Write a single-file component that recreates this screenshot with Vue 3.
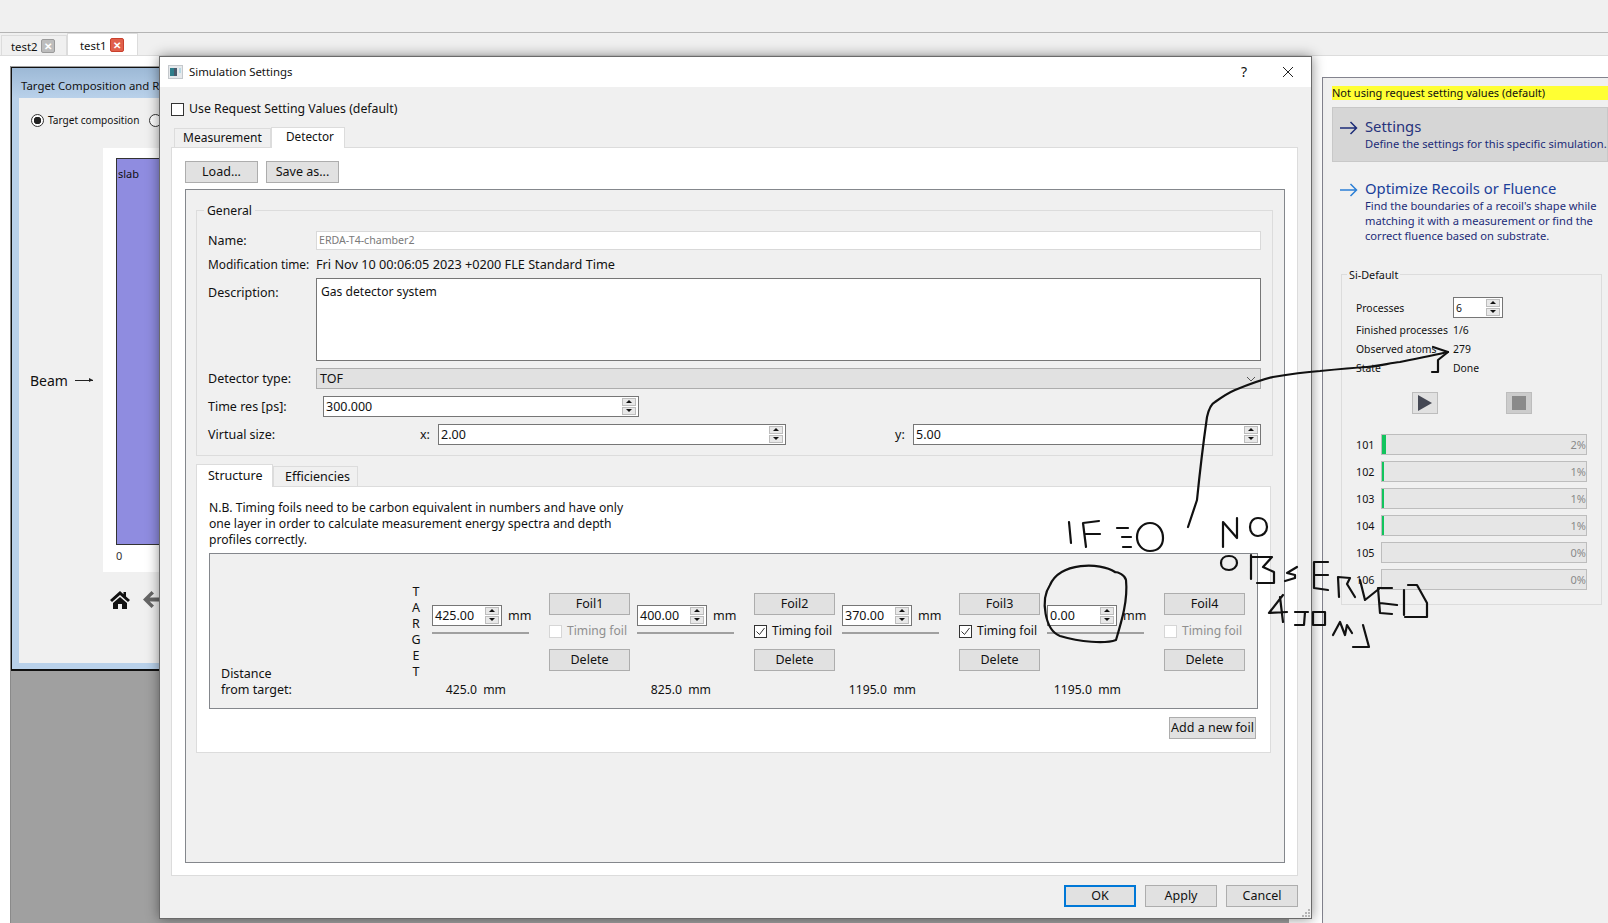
<script setup>
const segments = [
  { value: '425.00', foil: 'Foil1', total: '425.0', checked: false, disabled: true },
  { value: '400.00', foil: 'Foil2', total: '825.0', checked: true, disabled: false },
  { value: '370.00', foil: 'Foil3', total: '1195.0', checked: true, disabled: false },
  { value: '0.00', foil: 'Foil4', total: '1195.0', checked: false, disabled: true }
]

const bars = [
  { id: 101, pct: 2, fill: 4 },
  { id: 102, pct: 1, fill: 2 },
  { id: 103, pct: 1, fill: 2 },
  { id: 104, pct: 1, fill: 2 },
  { id: 105, pct: 0, fill: 0 },
  { id: 106, pct: 0, fill: 0 }
]

const ink = [
  'M1188 527 L1197 500 C1199 480 1203 445 1207 417 C1209 408 1211 404 1215 402 C1222 397 1228 393 1235 390 C1250 384 1260 380 1273 377 C1290 374 1305 372 1320 371 C1340 369 1350 368 1367 367 C1380 366 1390 363 1400 362 C1420 358 1435 355 1448 352',
  'M1433 347 L1448 352 L1438 360 L1438 372 L1432 372',
  'M1069 522 L1071 543',
  'M1086 547 L1083 523 L1099 521 M1086 534 L1100 534',
  'M1117 528 L1128 528 M1122 537 L1131 537 M1123 547 L1131 547',
  'M1150 523 C1158 523 1163 530 1163 538 C1163 546 1158 551 1150 551 C1142 551 1137 544 1137 537 C1137 529 1143 523 1150 523 Z',
  'M1223 547 L1223 522 L1237 538 L1237 518',
  'M1258 518 C1264 518 1267 522 1267 527 C1267 532 1263 536 1258 536 C1253 536 1250 532 1250 527 C1250 522 1253 518 1258 518 Z',
  'M1229 556 C1234 556 1237 559 1237 563 C1237 567 1233 570 1229 570 C1224 570 1221 567 1221 563 C1221 559 1224 556 1229 556 Z',
  'M1251 555 L1251 579 M1251 557 L1272 557 L1263 567 L1274 572 L1274 583 L1257 583',
  'M1297 567 L1287 573 L1295 575 L1295 578 L1285 581',
  'M1328 562 L1314 562 L1314 588 L1328 590 M1314 575 L1328 575',
  'M1339 597 L1338 577 L1350 578 L1347 584 L1355 597',
  'M1360 580 L1365 600 L1380 588',
  'M1392 588 L1378 588 L1380 613 L1392 614 M1380 603 L1397 605',
  'M1404 615 L1404 590 M1408 585 L1417 585 L1427 603 L1427 617 L1405 617',
  'M1283 595 L1269 613 L1287 612 M1280 597 L1283 622',
  'M1295 612 L1308 612 M1305 612 L1304 625 L1295 625',
  'M1313 612 L1325 612 L1325 625 L1313 625 Z',
  'M1333 635 L1340 622 L1345 635 L1347 625 L1352 633',
  'M1363 625 L1369 647 L1353 647',
  'M1115 572 C1100 562 1060 562 1050 585 C1040 600 1045 630 1060 636 C1080 642 1105 644 1116 640 C1122 620 1128 600 1126 580 C1125 575 1118 572 1115 572'
]
</script>

<template>
  <div class="screen">
    <div class="menu-band"></div>
    <div class="doc-tabs">
      <div class="doc-tab">
        test2
        <span class="tab-close">✕</span>
      </div>
      <div class="doc-tab active">
        test1
        <span class="tab-close red">✕</span>
      </div>
    </div>

    <div class="mdi-grey"></div>

    <!-- window behind the dialog -->
    <div class="target-window">
      <div class="target-title">Target Composition and Recoils</div>
      <div class="target-body">
        <div class="radio-row">
          <span class="radio on"></span>
          <span>Target composition</span>
          <span class="radio second"></span>
        </div>
        <div class="plot-row">
          <div class="beam">Beam <span class="beam-arrow"></span></div>
          <div class="plot-col">
            <div class="plot">
              <div class="slab"><span>slab</span></div>
              <div class="tick">0</div>
            </div>
            <div class="plot-tools">
              <svg width="22" height="19" viewBox="0 0 22 19">
                <path d="M11 1 L1 10 L3 12 L11 5 L19 12 L21 10 L17 6.5 L17 2 L14.5 2 L14.5 4.3 Z M4 13 L11 7 L18 13 L18 19 L13 19 L13 14 L9 14 L9 19 L4 19 Z" fill="#111" />
              </svg>
              <svg width="20" height="19" viewBox="0 0 20 19">
                <path d="M9.5 1 L1 9.5 L9.5 18 L12 15.5 L7.7 11.5 L20 11.5 L20 7.5 L7.7 7.5 L12 3.5 Z" fill="#666" />
              </svg>
            </div>
          </div>
        </div>
      </div>
    </div>

    <!-- run panel on the right -->
    <div class="run-window">
      <div class="notice">Not using request setting values (default)</div>
      <div class="link-box current">
        <svg class="link-arrow" width="18" height="14" viewBox="0 0 18 14">
          <path d="M0 7 H16.5 M10.5 1 L16.5 7 L10.5 13" fill="none" stroke="#1c2c78" stroke-width="1.5" />
        </svg>
        <div>
          <div class="link-head">Settings</div>
          <div class="link-sub">Define the settings for this specific simulation.</div>
        </div>
      </div>
      <div class="link-box">
        <svg class="link-arrow" width="18" height="14" viewBox="0 0 18 14">
          <path d="M0 7 H16.5 M10.5 1 L16.5 7 L10.5 13" fill="none" stroke="#2b7fd6" stroke-width="1.5" />
        </svg>
        <div>
          <div class="link-head optimize">Optimize Recoils or Fluence</div>
          <div class="link-sub">
            Find the boundaries of a recoil's shape while<br />
            matching it with a measurement or find the<br />
            correct fluence based on substrate.
          </div>
        </div>
      </div>

      <div class="si-group">
        <div class="si-title">Si-Default</div>
        <div class="si-grid">
          <span class="si-first">Processes</span>
          <div class="spin si-spin">
            <span class="spin-val">6</span>
            <span class="spin-btns"><i class="up"></i><i class="down"></i></span>
          </div>
          <span>Finished processes</span><span>1/6</span>
          <span>Observed atoms</span><span>279</span>
          <span>State</span><span>Done</span>
        </div>
        <div class="run-btns">
          <div class="run-btn">
            <svg width="14" height="16" viewBox="0 0 14 16"><path d="M0 0 L14 8 L0 16 Z" fill="#454854" /></svg>
          </div>
          <div class="run-btn off">
            <span class="stop-mark"></span>
          </div>
        </div>
        <div class="bars">
          <div v-for="bar in bars" :key="bar.id" class="bar-row">
            <span class="bar-id">{{ bar.id }}</span>
            <div class="bar">
              <span class="bar-fill" :style="{ width: bar.fill + 'px' }"></span>
              <span class="bar-pct">{{ bar.pct }}%</span>
            </div>
          </div>
        </div>
      </div>
    </div>

    <!-- settings dialog -->
    <div class="dialog">
      <div class="dialog-title">
        <svg class="dialog-icon" width="15" height="14" viewBox="0 0 15 14">
          <rect x="0.5" y="0.5" width="14" height="13" fill="#e6e9ec" stroke="#c4c8cc" />
          <rect x="2" y="3" width="4" height="8" fill="#2f7f8c" />
          <rect x="6" y="3" width="3" height="8" fill="#4a5a6c" />
          <rect x="11" y="3" width="2" height="5" fill="#b6d8e4" />
        </svg>
        <span class="dialog-name">Simulation Settings</span>
        <span class="help">?</span>
        <svg class="close-x" width="12" height="12" viewBox="0 0 12 12">
          <path d="M1 1 L11 11 M11 1 L1 11" stroke="#222" stroke-width="1" fill="none" />
        </svg>
      </div>

      <div class="dialog-body">
        <label class="use-default">
          <span class="check"></span>
          Use Request Setting Values (default)
        </label>

        <div class="tabs top-tabs">
          <div class="tab">Measurement</div>
          <div class="tab active">Detector</div>
        </div>

        <div class="pane">
          <div class="file-btns">
            <div class="btn">Load...</div>
            <div class="btn">Save as...</div>
          </div>

          <div class="frame">
            <div class="group">
              <div class="group-title">General</div>

              <div class="row name-row">
                <span class="lbl">Name:</span>
                <div class="name-input">ERDA-T4-chamber2</div>
              </div>
              <div class="row mod-row">
                <span class="lbl mod-lbl">Modification time:</span>
                <span class="mod-val">Fri Nov 10 00:06:05 2023 +0200 FLE Standard Time</span>
              </div>
              <div class="row desc-row">
                <span class="lbl desc-lbl">Description:</span>
                <div class="desc">Gas detector system</div>
              </div>
              <div class="row combo-row">
                <span class="lbl">Detector type:</span>
                <div class="combo">
                  TOF
                  <svg width="10" height="6" viewBox="0 0 10 6"><path d="M1 1 L5 5 L9 1" fill="none" stroke="#555" /></svg>
                </div>
              </div>
              <div class="row time-row">
                <span class="lbl time-lbl">Time res [ps]:</span>
                <div class="spin time-spin">
                  <span class="spin-val">300.000</span>
                  <span class="spin-btns"><i class="up"></i><i class="down"></i></span>
                </div>
              </div>
              <div class="row size-row">
                <span class="size-lbl">Virtual size:</span>
                <span class="axis">x:</span>
                <div class="spin size-spin">
                  <span class="spin-val">2.00</span>
                  <span class="spin-btns"><i class="up"></i><i class="down"></i></span>
                </div>
                <span class="axis axis-y">y:</span>
                <div class="spin size-spin">
                  <span class="spin-val">5.00</span>
                  <span class="spin-btns"><i class="up"></i><i class="down"></i></span>
                </div>
              </div>
            </div>

            <div class="tabs sub-tabs">
              <div class="tab active">Structure</div>
              <div class="tab">Efficiencies</div>
            </div>
            <div class="sub-pane">
              <p class="note">
                N.B. Timing foils need to be carbon equivalent in numbers and have only<br />
                one layer in order to calculate measurement energy spectra and depth<br />
                profiles correctly.
              </p>

              <div class="foils">
                <div class="dist-label">Distance<br />from target:</div>
                <div class="target-word">
                  <span v-for="(c, i) in 'TARGET'.split('')" :key="i">{{ c }}</span>
                </div>
                <div v-for="seg in segments" :key="seg.foil" class="segment">
                  <div class="seg-dist">
                    <div class="seg-top">
                      <div class="spin foil-spin">
                        <span class="spin-val">{{ seg.value }}</span>
                        <span class="spin-btns"><i class="up"></i><i class="down"></i></span>
                      </div>
                      <span class="mm">mm</span>
                    </div>
                    <div class="seg-line"></div>
                  </div>
                  <div class="foil">
                    <div class="btn foil-btn">{{ seg.foil }}</div>
                    <div class="timing" :class="{ disabled: seg.disabled }">
                      <span class="check" :class="{ checked: seg.checked }">
                        <svg v-if="seg.checked" width="11" height="11" viewBox="0 0 11 11">
                          <path d="M1.5 5.5 L4.5 8.5 L9.5 2" fill="none" stroke="#333" stroke-width="1" />
                        </svg>
                      </span>
                      Timing foil
                    </div>
                    <div class="btn foil-btn">Delete</div>
                  </div>
                </div>
                <div v-for="(seg, i) in segments" :key="i" class="total" :style="{ gridColumn: i + 3 }">
                  {{ seg.total }}&nbsp; mm
                </div>
              </div>

              <div class="add-row">
                <div class="btn add-btn">Add a new foil</div>
              </div>
            </div>
          </div>
        </div>

        <div class="dialog-actions">
          <div class="btn action default">OK</div>
          <div class="btn action">Apply</div>
          <div class="btn action">Cancel</div>
        </div>
      </div>
      <svg class="grip" width="10" height="10" viewBox="0 0 10 10">
        <g fill="#b5b5b5">
          <rect x="7" y="1" width="2" height="2" />
          <rect x="4" y="4" width="2" height="2" />
          <rect x="7" y="4" width="2" height="2" />
          <rect x="1" y="7" width="2" height="2" />
          <rect x="4" y="7" width="2" height="2" />
          <rect x="7" y="7" width="2" height="2" />
        </g>
      </svg>
    </div>

    <!-- pen annotations drawn over the screenshot -->
    <svg class="ink" width="1608" height="923" viewBox="0 0 1608 923">
      <path v-for="(d, i) in ink" :key="i" :d="d" />
    </svg>
  </div>
</template>

<style>
html,
body {
  margin: 0;
  background: #fff;
}
</style>

<style scoped>
.screen {
  position: relative;
  width: 1608px;
  height: 923px;
  overflow: hidden;
  background: #fff;
  font-family: "Noto Sans", "Liberation Sans", sans-serif;
  font-size: 12.5px;
  line-height: 16px;
  color: #111;
}

.menu-band {
  height: 32px;
  background: #f0f0f0;
  border-bottom: 1px solid #b4b4b4;
}

.doc-tabs {
  display: flex;
  align-items: flex-end;
  height: 22px;
  padding-left: 1px;
  background: #f0f0f0;
  border-bottom: 1px solid #dcdcdc;
}

.doc-tab {
  display: flex;
  align-items: center;
  gap: 3px;
  width: 66px;
  height: 20px;
  box-sizing: border-box;
  padding: 2px 0 0 9px;
  border: 1px solid #dcdcdc;
  border-bottom: 0;
  font-size: 11.4px;
}

.doc-tab.active {
  width: 71px;
  height: 22px;
  padding: 2px 0 0 12px;
  background: #fff;
}

.tab-close {
  display: block;
  width: 12px;
  height: 12px;
  margin-top: -2px;
  border: 1px solid #9a9a9a;
  border-radius: 2px;
  background: #bdbdbd;
  color: #fff;
  font-size: 10px;
  font-weight: 700;
  line-height: 12px;
  text-align: center;
}

.tab-close.red {
  border-color: #c9402c;
  background: #e0604c;
}

.mdi-grey {
  position: absolute;
  left: 10px;
  top: 66px;
  width: 1279px;
  height: 857px;
  background: #a0a0a0;
  border-left: 1px solid #8a8a8a;
  box-sizing: border-box;
}

.target-window {
  position: absolute;
  left: 11px;
  top: 67px;
  width: 400px;
  height: 604px;
  box-sizing: border-box;
  display: flex;
  flex-direction: column;
  border: 1px solid #111;
  border-bottom: 2px solid #111;
  background: #b9d1ea;
}

.target-title {
  height: 30px;
  padding-left: 9px;
  line-height: 35px;
  font-size: 11.4px;
  background: linear-gradient(#9db9d6, #b9d1ea);
  white-space: nowrap;
}

.target-body {
  flex: 1;
  margin: 0 0 6px 7px;
  background: #f0f0f0;
}

.radio-row {
  display: flex;
  align-items: center;
  height: 44px;
  padding-left: 12px;
  font-size: 10.1px;
}

.radio {
  width: 11px;
  height: 11px;
  margin-right: 4px;
  border: 1px solid #333;
  border-radius: 50%;
  background: #fff;
  box-sizing: content-box;
}

.radio.on {
  background: radial-gradient(circle, #222 0 3.5px, #fff 4px);
}

.radio.second {
  margin-left: 10px;
}

.plot-row {
  display: flex;
  height: 420px;
  margin-top: 6px;
}

.beam {
  display: flex;
  align-items: center;
  gap: 7px;
  width: 84px;
  height: 443px;
  margin-top: 11px;
  padding-left: 11px;
  box-sizing: border-box;
  font-size: 14px;
  white-space: nowrap;
}

.beam-arrow {
  position: relative;
  width: 18px;
  height: 1px;
  background: #222;
}

.beam-arrow::after {
  content: "";
  position: absolute;
  right: 0;
  top: -2px;
  border-left: 4px solid #222;
  border-top: 2.5px solid transparent;
  border-bottom: 2.5px solid transparent;
}

.plot-col {
  display: flex;
  flex-direction: column;
}

.plot {
  flex: none;
  width: 280px;
  height: 424px;
  box-sizing: border-box;
  padding: 10px 0 0 13px;
  background: #fff;
}

.slab {
  width: 240px;
  height: 387px;
  box-sizing: border-box;
  padding: 7px 0 0 1px;
  border: 1px solid #333;
  background: #8f8ce0;
  font-size: 11px;
}

.tick {
  margin-top: 3px;
  font-size: 11px;
  color: #333;
}

.plot-tools {
  display: flex;
  gap: 11px;
  margin: 18px 0 0 6px;
}

.run-window {
  position: absolute;
  left: 1322px;
  top: 77px;
  width: 286px;
  height: 846px;
  box-sizing: border-box;
  padding: 8px 0 0 9px;
  border-left: 1px solid #83838e;
  border-top: 1px solid #83838e;
  background: #f0f0f0;
}

.notice {
  height: 14px;
  background: #ffff33;
  font-size: 11px;
  line-height: 14px;
  white-space: nowrap;
}

.link-box {
  display: flex;
  gap: 7px;
  padding: 8px 0 0 7px;
  height: 55px;
  box-sizing: border-box;
  color: #1c2c78;
  white-space: nowrap;
}

.link-box.current {
  margin-top: 7px;
  border: 1px solid #c8c8c8;
  background: #d6d6d6;
}

.link-box + .link-box {
  height: 110px;
  padding: 16px 0 0 8px;
}

.link-arrow {
  margin-top: 5px;
  flex: none;
}

.link-head {
  font-size: 14.8px;
  line-height: 20px;
  color: #26337c;
}

.link-head.optimize {
  color: #1b3f9a;
}

.link-sub {
  font-size: 11.15px;
  line-height: 15px;
}

.si-group {
  width: 261px;
  height: 331px;
  margin: 2px 0 0 9px;
  box-sizing: border-box;
  padding: 0 14px;
  border: 1px solid #dcdcdc;
}

.si-title {
  width: fit-content;
  margin: -8px 0 14px -9px;
  padding: 0 2px;
  background: #f0f0f0;
  font-size: 10.8px;
}

.si-grid {
  display: grid;
  grid-template-columns: 97px 1fr;
  grid-template-rows: 23px;
  grid-auto-rows: 19px;
  align-items: center;
  font-size: 10.4px;
  white-space: nowrap;
}

.si-first {
  align-self: start;
  line-height: 22px;
}

.si-spin {
  align-self: start;
  width: 50px;
  height: 20px;
}

.run-btns {
  display: flex;
  gap: 68px;
  margin: 15px 0 0 56px;
}

.run-btn {
  display: flex;
  align-items: center;
  justify-content: center;
  width: 26px;
  height: 22px;
  box-sizing: border-box;
  border: 1px solid #bdbdbd;
  background: #e1e1e1;
}

.run-btn.off {
  background: #cccccc;
}

.stop-mark {
  width: 14px;
  height: 14px;
  background: #8a8a8a;
}

.bars {
  display: flex;
  flex-direction: column;
  gap: 6px;
  margin-top: 20px;
}

.bar-row {
  display: flex;
  align-items: center;
}

.bar-id {
  width: 25px;
  font-size: 10.8px;
}

.bar {
  display: flex;
  justify-content: space-between;
  width: 206px;
  height: 21px;
  box-sizing: border-box;
  border: 1px solid #bdbdbd;
  background: #e6e6e6;
}

.bar-fill {
  background: #12c45d;
}

.bar-pct {
  align-self: center;
  color: #8a8a8a;
  font-size: 11px;
}

.dialog {
  position: absolute;
  left: 159px;
  top: 56px;
  width: 1153px;
  height: 863px;
  box-sizing: border-box;
  display: flex;
  flex-direction: column;
  border: 1px solid #6a6a6a;
  background: #f0f0f0;
  box-shadow: 0 0 12px rgba(0, 0, 0, 0.45);
}

.dialog-title {
  display: flex;
  align-items: center;
  height: 30px;
  padding: 0 17px 0 8px;
  background: #fff;
}

.dialog-icon {
  margin-right: 6px;
}

.dialog-name {
  flex: 1;
  font-size: 11.4px;
}

.help {
  margin-right: 35px;
  font-size: 14px;
}

.dialog-body {
  flex: 1;
  padding: 14px 13px 0 11px;
  display: flex;
  flex-direction: column;
}

.use-default {
  display: flex;
  align-items: center;
  gap: 5px;
  height: 16px;
  margin-bottom: 9px;
  font-size: 12.3px;
}

.check {
  display: inline-flex;
  align-items: center;
  justify-content: center;
  width: 11px;
  height: 11px;
  flex: none;
  border: 1px solid #333;
  background: #fff;
}

.tabs {
  display: flex;
  align-items: flex-end;
  height: 21px;
  padding-left: 3px;
}

.tab {
  height: 19px;
  padding: 0 7px 0 11px;
  border: 1px solid #dcdcdc;
  border-bottom: 0;
  line-height: 20px;
}

.tab.active {
  height: 21px;
  margin-bottom: -1px;
  background: #fff;
  position: relative;
  z-index: 1;
  padding: 0 13px;
}

.top-tabs .tab {
  box-sizing: border-box;
  width: 97px;
  padding: 0 0 0 8px;
  font-size: 12px;
  line-height: 18px;
}

.top-tabs .tab.active {
  width: 74px;
  padding: 0 0 0 14px;
  font-size: 11.75px;
  line-height: 17px;
}

.pane {
  height: 729px;
  box-sizing: border-box;
  padding: 13px 12px 13px 13px;
  border: 1px solid #dcdcdc;
  background: #fff;
}

.file-btns {
  display: flex;
  gap: 8px;
  margin-bottom: 6px;
}

.btn {
  width: 73px;
  height: 22px;
  box-sizing: border-box;
  border: 1px solid #adadad;
  background: #e1e1e1;
  line-height: 20px;
  text-align: center;
}

.frame {
  height: 674px;
  box-sizing: border-box;
  padding: 20px 9px 0 10px;
  border: 1px solid #84878c;
  background: #f0f0f0;
}

.group {
  width: 1077px;
  height: 246px;
  box-sizing: border-box;
  padding: 0 11px 0 11px;
  border: 1px solid #dcdcdc;
}

.group-title {
  width: fit-content;
  margin: -8px 0 12px -4px;
  padding: 0 3px;
  background: #f0f0f0;
  font-size: 12.2px;
}

.row {
  display: flex;
  align-items: center;
}

.lbl {
  width: 108px;
  flex: none;
  white-space: nowrap;
}

.mod-lbl {
  font-size: 11.9px;
}

.mod-val {
  font-size: 12.7px;
}

.name-input {
  flex: 1;
  height: 19px;
  box-sizing: border-box;
  padding-left: 2px;
  border: 1px solid #d9d9d9;
  background: #fff;
  color: #7a7a7a;
  font-size: 10.6px;
  line-height: 17px;
}

.mod-row {
  height: 16px;
  margin-top: 6px;
}

.desc-row {
  align-items: flex-start;
  margin-top: 6px;
}

.desc-lbl {
  padding-top: 7px;
}

.desc {
  flex: 1;
  height: 83px;
  box-sizing: border-box;
  padding: 5px 4px;
  border: 1px solid #767676;
  background: #fff;
  font-size: 12.1px;
}

.combo-row {
  margin-top: 7px;
}

.combo {
  flex: 1;
  display: flex;
  align-items: center;
  justify-content: space-between;
  height: 21px;
  box-sizing: border-box;
  padding: 0 4px 0 3px;
  border: 1px solid #adadad;
  background: #e1e1e1;
}

.time-row,
.size-row {
  margin-top: 7px;
}

.time-lbl {
  width: 115px;
}

.spin {
  display: flex;
  align-items: center;
  height: 21px;
  box-sizing: border-box;
  padding: 1px 2px;
  border: 1px solid #767676;
  background: #fff;
}

.spin-val {
  flex: 1;
}

.spin-btns {
  display: flex;
  flex-direction: column;
  gap: 1px;
}

.spin-btns i {
  position: relative;
  display: block;
  width: 14px;
  height: 8px;
  box-sizing: border-box;
  border: 1px solid #bdbdbd;
  background: #e8e8e8;
}

.spin-btns i::after {
  content: "";
  position: absolute;
  left: 3px;
  border-left: 3px solid transparent;
  border-right: 3px solid transparent;
}

.spin-btns .up::after {
  top: 1px;
  border-bottom: 3px solid #111;
}

.spin-btns .down::after {
  top: 1px;
  border-top: 3px solid #111;
}

.time-spin {
  width: 316px;
}

.size-lbl {
  width: 212px;
  flex: none;
}

.axis {
  width: 18px;
  flex: none;
}

.axis-y {
  margin-left: 109px;
}

.size-spin {
  width: 348px;
  flex: none;
}

.sub-tabs {
  height: 23px;
  margin-top: 7px;
  padding-left: 0;
}

.sub-tabs .tab.active {
  height: 23px;
  width: 77px;
  box-sizing: border-box;
  padding: 0 0 0 11px;
  line-height: 22px;
}

.sub-pane {
  width: 1075px;
  height: 267px;
  box-sizing: border-box;
  padding: 13px 13px 0 12px;
  border: 1px solid #dcdcdc;
  background: #fff;
}

.note {
  margin: 0 0 5px;
  font-size: 12.15px;
}

.foils {
  display: grid;
  grid-template-columns: 189px 22px repeat(4, 205px);
  grid-template-rows: 96px 16px;
  row-gap: 2px;
  width: 1049px;
  height: 156px;
  box-sizing: border-box;
  padding: 30px 0 0 11px;
  border: 1px solid #84878c;
  background: #f0f0f0;
}

.dist-label {
  grid-row: 1 / 3;
  align-self: end;
}

.target-word {
  display: flex;
  flex-direction: column;
  align-items: center;
  width: 12px;
  grid-column: 2;
  grid-row: 1;
}

.segment {
  display: flex;
  grid-row: 1;
}

.seg-dist {
  width: 97px;
  margin: 21px 20px 0 0;
  flex: none;
}

.seg-top {
  display: flex;
  align-items: center;
  gap: 6px;
}

.foil-spin {
  width: 70px;
  flex: none;
}

.seg-line {
  height: 2px;
  margin-top: 6px;
  background: #a0a0a0;
}

.foil {
  width: 81px;
  flex: none;
  padding-top: 9px;
}

.foil-btn {
  width: 81px;
}

.timing {
  display: flex;
  align-items: center;
  gap: 5px;
  height: 16px;
  margin: 8px 0 10px;
  font-size: 12.1px;
  white-space: nowrap;
}

.timing.disabled {
  color: #8f8f8f;
}

.timing.disabled .check {
  border-color: #d6d6d6;
}

.total {
  grid-row: 2;
  width: 74px;
  font-size: 12.2px;
  text-align: right;
  white-space: nowrap;
}

.add-row {
  display: flex;
  justify-content: flex-end;
  width: 1047px;
  margin-top: 8px;
}

.add-btn {
  width: 87px;
}

.dialog-actions {
  display: flex;
  justify-content: flex-end;
  gap: 9px;
  margin-top: 9px;
}

.action {
  width: 72px;
}

.action.default {
  border: 2px solid #0078d7;
  line-height: 18px;
}

.grip {
  position: absolute;
  right: 0;
  bottom: 0;
}

.ink {
  position: absolute;
  left: 0;
  top: 0;
  pointer-events: none;
}

.ink path {
  fill: none;
  stroke: #111;
  stroke-width: 2.2;
  stroke-linecap: round;
  stroke-linejoin: round;
}
</style>
